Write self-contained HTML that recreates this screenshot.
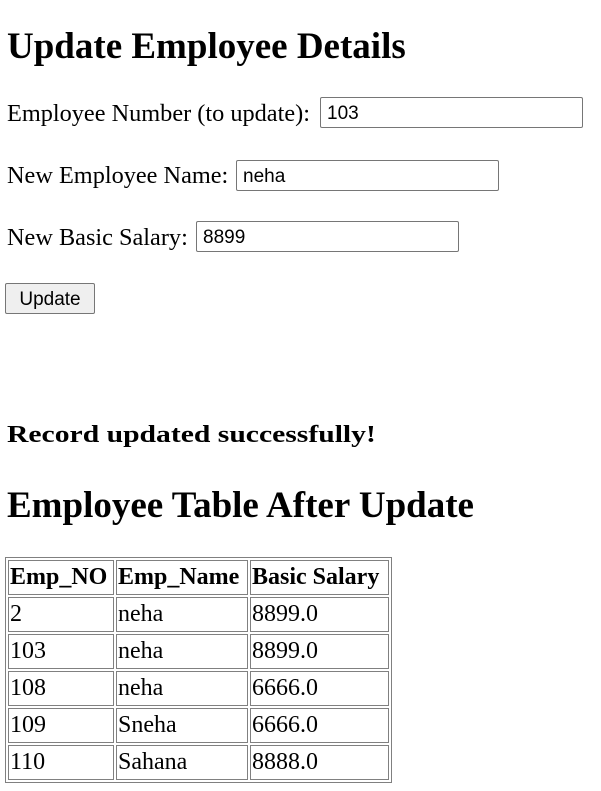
<!DOCTYPE html>
<html><head><meta charset="utf-8"><style>
body{margin:0;width:601px;height:791px;background:#fff;font-family:"Liberation Serif",serif;color:#000;position:relative;overflow:hidden}
.a{position:absolute;white-space:nowrap;line-height:1.15;transform-origin:left center}
h2{margin:0;font-size:37px;font-weight:bold}
.l{font-size:24.3px}
.in{position:absolute;border:1px solid #767676;border-radius:2px;height:31px;box-sizing:border-box;font-family:"Liberation Sans",sans-serif;font-size:19px;line-height:31px;padding-left:6px}
.btn{position:absolute;left:5px;top:283px;width:90px;height:31px;box-sizing:border-box;border:1px solid #767676;border-radius:2px;background:#efefef;font-family:"Liberation Sans",sans-serif;font-size:19px;text-align:center;line-height:31px}
table{position:absolute;left:5px;top:557px;border:1px solid #808080;border-spacing:2px;font-size:24px;table-layout:fixed}
td,th{border:1px solid #808080;padding:0 1px;text-align:left;height:33px;line-height:33px;overflow:visible;white-space:nowrap}
th{font-weight:bold}
</style></head><body>
<h2 class="a" style="left:7px;top:26px">Update Employee Details</h2>
<div class="a l" style="left:7px;top:100px">Employee Number (to update):</div>
<div class="in" style="left:320px;top:97px;width:263px">103</div>
<div class="a l" style="left:7px;top:162px">New Employee Name:</div>
<div class="in" style="left:236px;top:160px;width:263px">neha</div>
<div class="a l" style="left:7px;top:224px">New Basic Salary:</div>
<div class="in" style="left:196px;top:221px;width:263px">8899</div>
<div class="btn">Update</div>
<div class="a" style="left:7px;top:422px;font-weight:bold;font-size:24px;transform:scaleX(1.235)">Record updated successfully!</div>
<h2 class="a" style="left:7px;top:485px">Employee Table After Update</h2>
<table>
<colgroup><col style="width:106px"><col style="width:132px"><col style="width:139px"></colgroup>
<tr><th>Emp_NO</th><th>Emp_Name</th><th>Basic Salary</th></tr>
<tr><td>2</td><td>neha</td><td>8899.0</td></tr>
<tr><td>103</td><td>neha</td><td>8899.0</td></tr>
<tr><td>108</td><td>neha</td><td>6666.0</td></tr>
<tr><td>109</td><td>Sneha</td><td>6666.0</td></tr>
<tr><td>110</td><td>Sahana</td><td>8888.0</td></tr>
</table>
</body></html>
